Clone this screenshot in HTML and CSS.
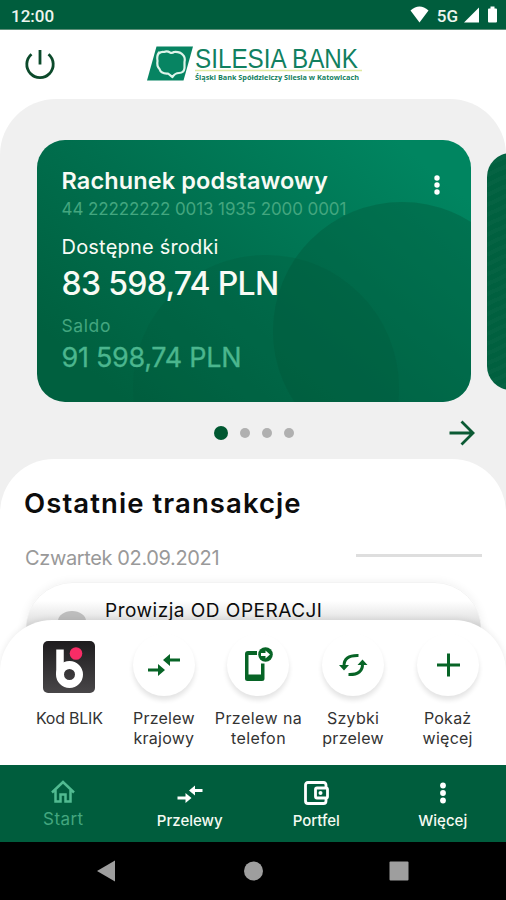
FILE: index.html
```html
<!DOCTYPE html>
<html lang="pl">
<head>
<meta charset="utf-8">
<title>Silesia Bank</title>
<link rel="stylesheet" href="styles.css">
</head>
<body>
<div class="screen">
  <div class="status-bar">
    <span class="clock">12:00</span>
    <span class="network">5G</span>
    <svg class="status-icons" width="96" height="30" viewBox="0 0 96 30">
      <path d="M.5 10.500Q9.500 2.500 18.500 10.500L9.500 22.500Z"/>
      <path d="M54 22.500L69 7.500V22.500Z"/>
      <path d="M79 8.500h1.500V6.500h4v2h1.500q1 0 1 1v12q0 1-1 1h-7q-1 0-1-1v-12q0-1 1-1z"/>
    </svg>
  </div>

  <header class="header">
    <svg class="power" width="34" height="34" viewBox="0 0 34 34"><path d="M17 3v14.500M8.500 7.300a13.200 13.200 0 1 0 17 0"/></svg>
    <svg class="logo" width="218" height="52" viewBox="0 -10 218 52">
      <path class="logo-mark" d="M10.500 3.500H47L37.500 37.500H1Z"/>
      <path class="logo-shape" d="M13 10.500Q15 8.500 18 9q3-1.500 6 .5q2 1 4-.5q6-.5 9 3q2.500 2.500 1.500 7v6q-.5 5-5.500 5q-4 0-6.500 4q-2-1.500-4.500-3.500q-7 .5-8.500-4.500q-3-3-2-8q-1-5 1.500-8.500z"/>
      <text class="logo-name" x="49" y="24.500" textLength="163" lengthAdjust="spacingAndGlyphs">SILESIA BANK</text>
      <path class="logo-line" d="M49 27.500H216"/>
      <text class="logo-sub" x="49" y="37" textLength="164" lengthAdjust="spacingAndGlyphs">Śląski Bank Spółdzielczy Silesia w Katowicach</text>
    </svg>
  </header>

  <main class="accounts">
    <div class="carousel">
      <section class="card">
        <svg class="card-art" width="434" height="262" viewBox="0 0 434 262">
          <circle cx="365" cy="191" r="129"/>
          <circle cx="229" cy="248" r="133"/>
        </svg>
        <div class="card-head">
          <h1 class="card-title">Rachunek podstawowy</h1>
          <svg class="card-menu" width="8" height="20" viewBox="0 0 8 20"><circle cx="4" cy="3" r="2.700"/><circle cx="4" cy="10" r="2.700"/><circle cx="4" cy="17" r="2.700"/></svg>
        </div>
        <div class="card-number">44 22222222 0013 1935 2000 0001</div>
        <div class="card-label">Dostępne środki</div>
        <div class="card-amount">83 598,74 PLN</div>
        <div class="card-sublabel">Saldo</div>
        <div class="card-balance">91 598,74 PLN</div>
      </section>
      <div class="next-card"></div>
    </div>
    <div class="pager">
      <div class="dots"><i class="dot active"></i><i class="dot"></i><i class="dot"></i><i class="dot"></i></div>
      <svg class="arrow" width="28" height="28" viewBox="0 0 28 28"><path d="M2.500 14H26M14.500 2.500L26 14L14.500 25.500"/></svg>
    </div>
  </main>

  <section class="transactions">
    <h2 class="section-title">Ostatnie transakcje</h2>
    <div class="date-row"><span class="date">Czwartek 02.09.2021</span><span class="rule"></span></div>
    <div class="item"><span class="avatar"></span><span class="item-name">Prowizja OD OPERACJI</span></div>
  </section>

  <section class="shortcuts">
    <div class="shortcut">
      <svg class="blik" width="54" height="54" viewBox="0 0 54 54">
        <defs><linearGradient id="g" x1="0" y1="0" x2="0" y2="1"><stop offset="0" stop-color="#1e1c1e"/><stop offset="1" stop-color="#484648"/></linearGradient></defs>
        <rect class="blik-bg" x="1" y="1" width="52" height="52" rx="5" fill="url(#g)"/>
        <path class="blik-stem" d="M18 9.500V34"/>
        <circle class="blik-bowl" cx="27.500" cy="34.500" r="9.500"/>
        <circle class="blik-dot" cx="34" cy="13.500" r="6.300"/>
      </svg>
      <span class="label tight">Kod BLIK</span>
    </div>
    <div class="shortcut">
      <div class="round"><svg width="34" height="34" viewBox="0 0 34 34"><path class="solid" d="M1 20.500h10v-4.500l7 6-7 6v-4.500H1zM33 10.500H23v-4.500l-7 6 7 6v-4.500h10z"/></svg></div>
      <span class="label">Przelew<br>krajowy</span>
    </div>
    <div class="shortcut">
      <div class="round"><svg width="34" height="38" viewBox="0 0 34 38"><path class="solid" fill-rule="evenodd" d="M7 5H16V9H7.500V28.500H20V17.500H23.500V32.500Q23.500 35 21 35H6.500Q4 35 4 32.500V8Q4 5 7 5Z"/><circle class="solid" cx="24.500" cy="8.500" r="7.300"/><path class="arrow-cut" d="M20 7h4.500V4.500l4.500 4-4.500 4V10H20z"/></svg></div>
      <span class="label wide">Przelew na<br>telefon</span>
    </div>
    <div class="shortcut">
      <div class="round"><svg width="34" height="34" viewBox="0 0 34 34"><path class="line" d="M8 18.500Q7.500 7 22.500 7.500M26.500 15.500Q27 27 12.500 26.500"/><path class="solid" d="M3 17h10l-5 5.500zM21.500 17h10l-5-5.500z"/></svg></div>
      <span class="label">Szybki<br>przelew</span>
    </div>
    <div class="shortcut">
      <div class="round"><svg width="34" height="34" viewBox="0 0 34 34"><path class="line" d="M17.500 5.500V28.500M6 17H29"/></svg></div>
      <span class="label">Pokaż<br>więcej</span>
    </div>
  </section>

  <nav class="tabs">
    <div class="tab start">
      <svg width="26" height="26" viewBox="0 0 26 26"><path class="outline" d="M2 13.500L13 3L24 13.500M5.500 11V22.500H10.500V15.500H15.500V22.500H20.500V11"/></svg>
      <span>Start</span>
    </div>
    <div class="tab">
      <svg width="26" height="26" viewBox="0 0 26 26"><path d="M.5 16.500h8V13l6 5-6 5v-3.500H.5zM25.500 9H18V5.500l-6 5 6 5V12h7.500z"/></svg>
      <span>Przelewy</span>
    </div>
    <div class="tab">
      <svg width="26" height="26" viewBox="0 0 26 26"><path class="outline" d="M23 8V5Q23 2.500 20.500 2.500H5Q2.500 2.500 2.500 5V21Q2.500 23.500 5 23.500H20.500Q23 23.500 23 21V18"/><rect class="outline" x="12.500" y="8" width="12" height="10" rx="1.500"/><circle cx="17.500" cy="13" r="2"/></svg>
      <span>Portfel</span>
    </div>
    <div class="tab">
      <svg width="26" height="26" viewBox="0 0 26 26"><circle cx="13" cy="5.500" r="2.900"/><circle cx="13" cy="13" r="2.900"/><circle cx="13" cy="20.500" r="2.900"/></svg>
      <span>Więcej</span>
    </div>
  </nav>

  <div class="system-nav">
    <svg width="22" height="24" viewBox="0 0 22 24"><path d="M2 12L20 1.500V22.500Z"/></svg>
    <svg width="22" height="24" viewBox="0 0 22 24"><circle cx="11.500" cy="12" r="9.500"/></svg>
    <svg width="22" height="24" viewBox="0 0 22 24"><rect x="1.500" y="2.500" width="19" height="19" rx="1"/></svg>
  </div>
</div>
</body>
</html>
```
FILE: styles.css
```css
* { box-sizing: border-box; }
body { margin: 0; font-family: "Inter", sans-serif; background: #fff; color: #0c0c0c; }
h1, h2 { margin: 0; }
svg { display: block; flex: none; }
.screen { width: 506px; height: 900px; display: flex; flex-direction: column; overflow: hidden; }

.status-bar { height: 30px; flex: none; display: flex; align-items: center; background: #005d3d; color: #eef5ef; border-bottom: 1px solid #5d8e78; padding: 0 6px 0 11px; position: relative; font-family: Roboto, sans-serif; font-weight: 500; }
.clock { font-size: 17px; line-height: 30px; padding-top: 2px; }
.network { margin-left: auto; padding: 2px 42px 0 0; font-size: 17px; line-height: 30px; }
.status-icons { position: absolute; right: 0; top: 0; fill: #fff; }

.header { height: 69px; flex: none; display: flex; align-items: flex-start; padding: 3px 0 0 23px; }
.power { margin-top: 14px; fill: none; stroke: #0c4a2b; stroke-width: 2.800; }
.logo { margin-left: 89px; }
.logo-mark { fill: #078462; }
.logo-shape { fill: none; stroke: #dff4ea; stroke-width: 2.200; stroke-linejoin: round; }
.logo-name { font: 27px "Liberation Sans", sans-serif; fill: #118060; }
.logo-line { stroke: #dfe8a0; stroke-width: 1.500; }
.logo-sub { font: 700 7.500px "Open Sans", sans-serif; fill: #118060; }

.accounts { height: 420px; flex: none; padding: 41px 0 0 36.500px; background: #f0f0f0; border-radius: 56px 56px 0 0; }
.carousel { display: flex; align-items: center; gap: 16px; overflow: hidden; }
.card { width: 434.500px; height: 262px; flex: none; position: relative; overflow: hidden; padding: 24px 25px; border-radius: 28px; background: linear-gradient(40deg, #00603f 12%, #006f4e 48%, #008560 90%); color: #f8fbf5; }
.card-art { position: absolute; left: 0; top: 0; fill: #00583a; fill-opacity: .38; }
.card-art circle + circle { fill-opacity: .27; }
.card > div { position: relative; white-space: nowrap; }
.card-head { display: flex; justify-content: space-between; height: 32px; }
.card-title { font-size: 23.500px; line-height: 33px; font-weight: 600; letter-spacing: .120px; }
.card-menu { margin: 11px 5px 0 0; fill: #fff; }
.card-number { font-size: 17px; line-height: 26px; letter-spacing: -.090px; color: #43a67f; }
.card-label { margin-top: 11px; font-size: 20px; line-height: 28px; letter-spacing: .200px; }
.card-amount { margin-top: 2px; font-size: 32px; line-height: 42px; font-weight: 500; letter-spacing: -.700px; }
.card-sublabel { margin-top: 9px; font-size: 17.500px; line-height: 24px; letter-spacing: .600px; color: #43a67f; }
.card-balance { margin-top: 1px; font-size: 27px; line-height: 37px; letter-spacing: -.300px; color: #4bb68e; -webkit-text-stroke: .300px #4bb68e; }
.next-card { width: 60px; height: 237px; flex: none; border-radius: 24px; background: repeating-linear-gradient(155deg, #ffffff05 0 4px, #ffffff00 4px 9px), #00603f; }

.pager { display: flex; align-items: center; justify-content: space-between; height: 62px; padding: 0 31px 0 177px; }
.dots { display: flex; align-items: center; gap: 12px; }
.dot { width: 10px; height: 10px; border-radius: 50%; background: #b0b0b0; }
.dot.active { width: 14px; height: 14px; background: #005831; }
.arrow { fill: none; stroke: #0b5a34; stroke-width: 2.800; }

.transactions { height: 206px; flex: none; margin-top: -60px; padding: 25px 24px 0; border-radius: 54px 54px 0 0; background: #fff; overflow: hidden; }
.section-title { font-size: 27.500px; line-height: 38px; font-weight: 600; letter-spacing: 1.080px; }
.date-row { display: flex; align-items: center; justify-content: space-between; height: 30px; margin-top: 21px; padding-left: 1px; }
.date { font-size: 20px; letter-spacing: -.370px; color: #999; }
.rule { width: 126px; height: 2.500px; margin-top: -5px; background: #dedede; }
.item { height: 100px; margin: 9px 0 0 1px; border: 1px solid #f3f3f3; border-radius: 48px; display: flex; align-items: flex-start; box-shadow: 0 0 10px #0001; padding: 16px 0 0 32px; background: linear-gradient(#fff 18px, #dcdcdc 42px); }
.avatar { width: 28px; height: 20px; margin-top: 12px; border-radius: 50%; background: #bdbdbd; }
.item-name { margin-left: 19px; font-size: 19px; line-height: 24px; letter-spacing: .500px; }

.shortcuts { height: 145px; flex: none; margin-top: -45px; position: relative; display: flex; justify-content: space-between; padding: 20px 11px 0 22px; border-radius: 52px 52px 0 0; background: #fff; box-shadow: 0 -1px 6px #00000014; }
.shortcut { width: 94.600px; flex: none; display: flex; flex-direction: column; align-items: center; }
.blik { margin-bottom: 14px; }
.blik-stem { fill: none; stroke: #fff; stroke-width: 7.500; }
.blik-bowl { fill: none; stroke: #fff; stroke-width: 8; }
.blik-dot { fill: #f82c66; }
.round { width: 62px; height: 62px; flex: none; margin: -6px 0 12px; border-radius: 50%; display: flex; align-items: center; justify-content: center; box-shadow: 0 4px 5px #0000001c; }
.solid { fill: #076426; }
.line { fill: none; stroke: #076426; stroke-width: 3; }
.arrow-cut { fill: #fff; }
.label { font-size: 16px; line-height: 20px; text-align: center; color: #333; letter-spacing: .250px; white-space: nowrap; }
.label.wide { letter-spacing: .430px; }
.label.tight { letter-spacing: -.220px; }

.tabs { height: 77px; flex: none; position: relative; display: flex; background: #005d3d; color: #f4faf2; }
.tab { flex: 1; display: flex; flex-direction: column; align-items: center; padding-top: 15px; gap: 3px; font-size: 15px; line-height: 23px; font-weight: 500; fill: #fff; }
.start { font-size: 17px; font-weight: 400; letter-spacing: .400px; color: #43a67f; padding-top: 14px; }
.outline { fill: none; stroke: #fff; stroke-width: 2.800; }
.start .outline { stroke: #51bb91; stroke-width: 2.500; }

.system-nav { flex: 1; display: flex; align-items: center; justify-content: space-between; padding: 0 96px 0 95px; background: #000; fill: #9e9e9e; }
```
